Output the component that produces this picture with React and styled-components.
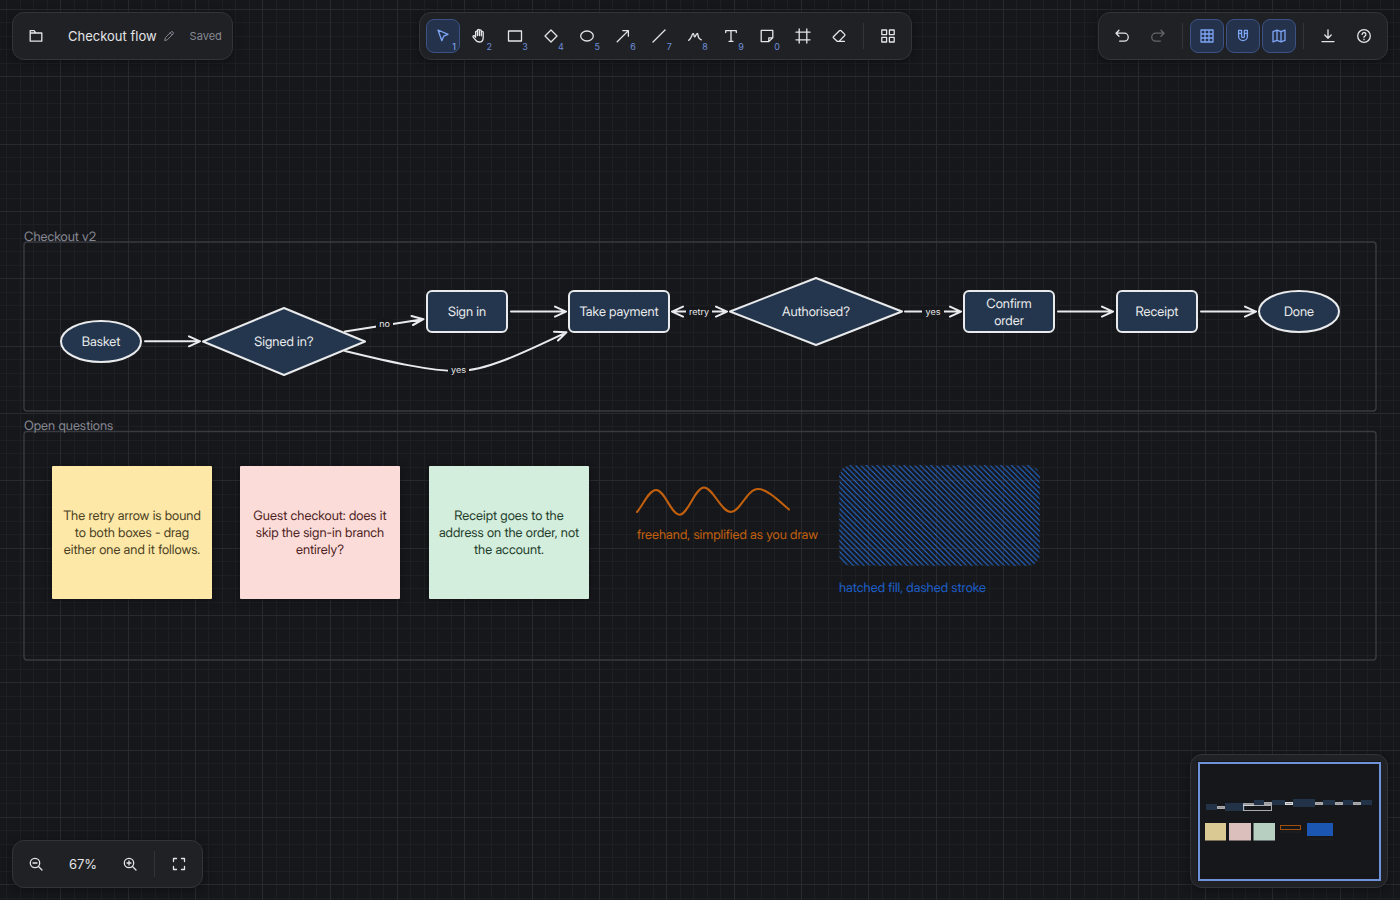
import React, { useEffect, useState } from "react";
import styled, { createGlobalStyle, css } from "styled-components";

const color = {
  canvas: "#16171b",
  gridMinor: "#1e1f23",
  gridMajor: "#292a2f",
  frame: "#3a3b41",
  panel: "#202125",
  line: "#33343b",
  text: "#e4e5e8",
  muted: "#868892",
  accent: "#7ea6f5",
  accentBg: "#24324c",
  accentLine: "#3a5285",
  nodeFill: "#24364d",
  ink: "#e9eaec",
  orange: "#c2600d",
  blue: "#1c5fc8",
  hatch: "#2470e0",
};

const GlobalStyle = createGlobalStyle`
  *, *::before, *::after { box-sizing: border-box; }
  body { margin: 0; background: ${color.canvas}; }
  body, button { font-family: Inter, "Liberation Sans", sans-serif; }
`;

/* ---------- chrome ---------- */

const Shell = styled.div`
  position: relative;
  min-height: 100vh;
  overflow: hidden;
  display: flex;
  flex-direction: column;
  justify-content: space-between;
  color: ${color.text};
`;

const Bar = styled.div`
  position: relative;
  display: flex;
  justify-content: space-between;
  align-items: ${(p) => p.$align || "flex-start"};
  padding: 12px;
`;

const Panel = styled.div`
  display: flex;
  align-items: center;
  gap: 2px;
  padding: 6px;
  background: ${color.panel};
  border: 1px solid ${color.line};
  border-radius: 12px;
  box-shadow: 0 2px 10px rgba(0, 0, 0, 0.35);
`;

const ToolButton = styled.button`
  position: relative;
  display: flex;
  align-items: center;
  justify-content: center;
  width: 34px;
  height: 34px;
  padding: 0;
  border: 1px solid transparent;
  border-radius: 8px;
  background: transparent;
  color: ${color.text};
  cursor: pointer;
  ${(p) =>
    p.$active &&
    css`
      background: ${color.accentBg};
      border-color: ${color.accentLine};
      color: ${color.accent};
    `}
  &:disabled {
    opacity: 0.35;
    cursor: default;
  }
`;

const KeyHint = styled.span`
  position: absolute;
  right: 3px;
  bottom: 0;
  font-size: 9px;
  line-height: 11px;
  color: ${(p) => (p.$active ? "#8fb0f5" : "#6c8fd9")};
`;

const Divider = styled.span`
  width: 1px;
  height: 26px;
  margin: 0 5px;
  background: ${color.line};
`;

const TitleButton = styled.button`
  display: flex;
  align-items: center;
  gap: 6px;
  height: 34px;
  padding: 0 13px;
  border: 0;
  background: transparent;
  color: ${color.text};
  font-size: 13px;
  line-height: 16px;
  svg {
    color: ${color.muted};
  }
`;

const SaveState = styled.span`
  padding-right: 4px;
  font-size: 11px;
  line-height: 16px;
  color: ${color.muted};
`;

const ZoomValue = styled.button`
  width: 56px;
  height: 34px;
  padding: 0;
  border: 0;
  background: transparent;
  color: ${color.text};
  font-size: 13px;
`;

const MapCanvas = styled.svg`
  display: block;
  width: 184px;
  height: 120px;
  background: ${color.canvas};
`;

/* ---------- board ---------- */

const Board = styled.main`
  position: absolute;
  inset: 0;
  font-family: "Inter Display", Inter, "Liberation Sans", sans-serif;
  text-rendering: geometricPrecision;
`;

const Drawing = styled.svg`
  position: absolute;
  inset: 0;
  width: 100%;
  height: 100%;
`;

const Placed = styled.div`
  position: absolute;
  left: ${(p) => p.$x}px;
  top: ${(p) => p.$y}px;
  width: ${(p) => (p.$w ? `${p.$w}px` : "max-content")};
  height: ${(p) => (p.$h ? `${p.$h}px` : "auto")};
  font-size: 13px;
  line-height: 17px;
`;

const Caption = styled(Placed)`
  margin: 0;
  font-weight: 400;
  color: ${(p) => p.$color};
  white-space: nowrap;
`;

const NodeLabel = styled(Placed)`
  display: flex;
  align-items: center;
  justify-content: center;
  text-align: center;
  padding: 2px 8px 0;
  color: ${color.ink};
`;

const EdgeLabel = styled(Placed)`
  display: flex;
  align-items: center;
  justify-content: center;
  background: ${color.canvas};
  color: ${color.ink};
  font-family: Inter, "Liberation Sans", sans-serif;
  font-size: 9px;
  line-height: 14px;
`;

const Note = styled(Placed)`
  display: flex;
  align-items: center;
  justify-content: center;
  padding: 2px 6px 0;
  text-align: center;
  border-radius: 1px;
  background: ${(p) => p.$fill};
  color: ${(p) => p.$color};
  box-shadow: 0 0 2px rgba(30, 30, 30, 1), 0 2px 8px rgba(0, 0, 0, 0.3);
`;

/* ---------- icons ---------- */

const glyphs = {
  folder: <path d="M2.2 13.2V2.7h3.9l1.7 2.3h6v8.2z M2.5 5h5" />,
  pencil: <path d="M2.4 13.6l.9-3.6 7.4-7.4a1.7 1.7 0 0 1 2.4 0l.3.3a1.7 1.7 0 0 1 0 2.4L6 12.7z M9.6 3.9l2.5 2.5" />,
  select: <path d="M3 2l10 4.3-4.3 1.9-1.9 4.5z" />,
  rect: <path d="M1.5 3h13v10h-13z" />,
  diamond: <path d="M8 2l6 6-6 6-6-6z" />,
  ellipse: <ellipse cx="8" cy="8" rx="6.3" ry="5" />,
  arrow: <path d="M2.2 13.8L13.4 2.6 M7.8 2.6h5.6v5.6" />,
  line: <path d="M2 14L14 2" />,
  draw: <path d="M1.7 12.4C3.6 11.2 4.3 9 5.3 6.6C6 5 6.8 5.4 7 7.2C7.2 9.6 8 9.4 8.7 7.6C9.6 5 10.8 4.8 11 7.2C11.2 9.8 12.3 11 14.3 11.8" />,
  text: <path d="M2.7 4.6V2.7h10.6v1.9 M8 2.7v10.6 M6 13.3h4" />,
  note: <path d="M2.2 2.4h11.6v7.4l-4 3.8H2.2z M13.8 9.8h-4v3.8" />,
  frame: <path d="M4.2 1v14 M11.8 1v14 M1 4.2h14 M1 11.8h14" />,
  eraser: <path d="M2.4 8.7L8.4 2.7a1.2 1.2 0 0 1 1.7 0l3.4 3.4a1.2 1.2 0 0 1 0 1.7L8 13.4H6.4L2.4 9.7a.7.7 0 0 1 0-1z M8 13.4h5.4" />,
  shapes: <path d="M1.8 2h4.8v4.6H1.8z M9.4 2h4.8v4.6H9.4z M1.8 9.4h4.8v4.6H1.8z M9.4 9.4h4.8v4.6H9.4z" />,
  undo: <path d="M5 2.2L2 5.2l3 3 M2 5.2h8.3a3.9 3.9 0 0 1 0 7.9H5.6" />,
  redo: <path d="M11 2.2l3 3-3 3 M14 5.2H5.7a3.9 3.9 0 0 0 0 7.9h4.7" />,
  grid: <path d="M2 2h12v12H2z M6 2v12 M10 2v12 M2 6h12 M2 10h12" />,
  magnet: <path d="M3.6 2.3h3v5.9a1.4 1.4 0 0 0 2.8 0V2.3h3v5.9a4.4 4.4 0 0 1-8.8 0z M3.6 5.3h3 M9.4 5.3h3" />,
  map: <path d="M2 3.6l4-1.5 4 1.5 4-1.5v10.3l-4 1.5-4-1.5-4 1.5z M6 2.1v10.3 M10 3.6v10.3" />,
  download: <path d="M8 1.8v8.4 M4.8 7l3.2 3.2L11.2 7 M2 13.6h12" />,
  help: (
    <>
      <circle cx="8" cy="8" r="6.3" />
      <path d="M6.1 6.4a1.9 1.9 0 1 1 2.8 1.7c-.6.3-.9.6-.9 1.2 M8 11.2v.5" />
    </>
  ),
  zoomOut: (
    <>
      <circle cx="7" cy="7" r="4.7" />
      <path d="M10.5 10.5L14 14 M5 7h4" />
    </>
  ),
  zoomIn: (
    <>
      <circle cx="7" cy="7" r="4.7" />
      <path d="M10.5 10.5L14 14 M5 7h4 M7 5v4" />
    </>
  ),
  fit: <path d="M2.5 5.5v-3h3 M10.5 2.5h3v3 M13.5 10.5v3h-3 M5.5 13.5h-3v-3" />,
  hand: (
    <path d="M4.6 9.2V4a.95.95 0 0 1 1.9 0V7.6 M6.5 7.5V2.4a.95.95 0 0 1 1.9 0V7.5 M8.4 7.5V2.8a.95.95 0 0 1 1.9 0V7.8 M10.3 7.8V4.3a.95.95 0 0 1 1.9 0v5.4c0 2.7-1.7 4.3-4 4.3-2 0-3.1-.8-4-2.3L2 8.8a.95.95 0 0 1 1.5-1l1.1 1.4" />
  ),
};

function Icon({ name, size = 16 }) {
  return (
    <svg
      width={size}
      height={size}
      viewBox="0 0 16 16"
      fill="none"
      stroke="currentColor"
      strokeWidth="1.3"
      strokeLinecap="round"
      strokeLinejoin="round"
      aria-hidden="true"
    >
      {glyphs[name]}
    </svg>
  );
}

function Tool({ icon, label, hint, active, disabled }) {
  return (
    <ToolButton type="button" aria-label={label} aria-pressed={active} $active={active} disabled={disabled}>
      <Icon name={icon} />
      {hint && <KeyHint $active={active}>{hint}</KeyHint>}
    </ToolButton>
  );
}

/* ---------- data ---------- */

const tools = [
  ["select", "Select", "1"],
  ["hand", "Pan", "2"],
  ["rect", "Rectangle", "3"],
  ["diamond", "Diamond", "4"],
  ["ellipse", "Ellipse", "5"],
  ["arrow", "Arrow", "6"],
  ["line", "Line", "7"],
  ["draw", "Draw", "8"],
  ["text", "Text", "9"],
  ["note", "Sticky note", "0"],
  ["frame", "Frame"],
  ["eraser", "Eraser"],
];

const nodes = [
  { kind: "ellipse", x: 61, y: 321, w: 80, h: 41, text: "Basket" },
  { kind: "diamond", x: 203, y: 308, w: 162, h: 67, text: "Signed in?" },
  { kind: "rect", x: 427, y: 291, w: 80, h: 41, text: "Sign in" },
  { kind: "rect", x: 569, y: 291, w: 100, h: 41, text: "Take payment" },
  { kind: "diamond", x: 730, y: 278, w: 172, h: 67, text: "Authorised?" },
  { kind: "rect", x: 964, y: 291, w: 90, h: 41, text: "Confirm order" },
  { kind: "rect", x: 1117, y: 291, w: 80, h: 41, text: "Receipt" },
  { kind: "ellipse", x: 1259, y: 291, w: 80, h: 41, text: "Done" },
];

const edgeLabels = [
  { x: 376, y: 318, w: 17, text: "no" },
  { x: 448, y: 364, w: 21, text: "yes" },
  { x: 686, y: 306, w: 26, text: "retry" },
  { x: 922, y: 306, w: 22, text: "yes" },
];

const head = (x, y) => `M${x - 11} ${y - 5}L${x} ${y}L${x - 11} ${y + 5}`;
const straight = (x1, x2, y) => `M${x1} ${y}H${x2}${head(x2, y)}`;

const edges = [
  straight(145, 200, 341.3),
  "M345 331.5L423 319.3M411.5 316L423.5 319.2L413 325",
  "M345 351C390 362 430 371 458 371S525 352 566 332.5M554 331.8L566.5 332.2L558 340.5",
  straight(511, 566, 311.6),
  straight(672, 727, 311.6) + "M683 306.6L672 311.6L683 316.6",
  straight(905, 961, 311.6),
  straight(1058, 1113, 311.6),
  straight(1201, 1256, 311.6),
];

const notes = [
  { x: 52, fill: "#fde8a8", ink: "#4b411f", text: "The retry arrow is bound to both boxes - drag either one and it follows." },
  { x: 240, fill: "#fbdcd9", ink: "#4e2323", text: "Guest checkout: does it skip the sign-in branch entirely?" },
  { x: 429, fill: "#d3eedd", ink: "#1f3d2c", text: "Receipt goes to the address on the order, not the account." },
];

const mapNodes = [
  [9, 43, 11, 6],
  [28, 42, 20, 8],
  [57, 39, 10, 5],
  [75, 39, 13, 5],
  [96, 38, 22, 8],
  [126, 39, 12, 5],
  [146, 39, 10, 5],
  [164, 39, 11, 5],
];
const mapEdges = [
  [20.5, 45.5, 7, 2, 0.6],
  [46.5, 42.5, 10, 2, 0.5],
  [46.5, 44.5, 28, 5, 0.7],
  [67.5, 41.5, 7, 2, 0.6],
  [88.5, 41.5, 7, 2, 0.9],
  [118.5, 41.5, 7, 2, 0.6],
  [138.5, 41.5, 7, 2, 0.6],
  [156.5, 41.5, 7, 2, 0.6],
];

/* ---------- grid ---------- */

const STEP = 13.466;

function useWindowSize() {
  const read = () => ({ w: window.innerWidth, h: window.innerHeight });
  const [size, setSize] = useState(read);
  useEffect(() => {
    const onResize = () => setSize(read());
    window.addEventListener("resize", onResize);
    return () => window.removeEventListener("resize", onResize);
  }, []);
  return size;
}

function gridLines(origin, length) {
  const minor = [];
  const major = [];
  for (let k = Math.ceil(-origin / STEP); origin + k * STEP < length; k += 1) {
    const at = Math.round(origin + k * STEP) + 0.5;
    (k % 5 === 0 ? major : minor).push(at);
  }
  return { minor, major };
}

function Grid() {
  const { w, h } = useWindowSize();
  const cols = gridLines(60.3, w);
  const rows = gridLines(9, h);
  const path = (xs, ys) => xs.map((x) => `M${x} 0V${h}`).join("") + ys.map((y) => `M0 ${y}H${w}`).join("");
  return (
    <>
      <path d={path(cols.minor, rows.minor)} stroke={color.gridMinor} />
      <path d={path(cols.major, rows.major)} stroke={color.gridMajor} />
    </>
  );
}

function Shape({ kind, x, y, w, h }) {
  if (kind === "ellipse") return <ellipse cx={x + w / 2} cy={y + h / 2} rx={w / 2} ry={h / 2} />;
  if (kind === "diamond")
    return <path d={`M${x + w / 2} ${y}L${x + w} ${y + h / 2}L${x + w / 2} ${y + h}L${x} ${y + h / 2}Z`} />;
  return <rect x={x} y={y} width={w} height={h} rx="5" />;
}

function Scene() {
  return (
    <Board aria-label="Board">
      <Drawing aria-hidden="true">
        <defs>
          <pattern id="hatch" width="8" height="8" patternUnits="userSpaceOnUse" patternTransform="translate(839 465) scale(0.673)">
            <path d="M-1 -1L9 9M-1 7L1 9M7 -1L9 1" stroke={color.hatch} strokeWidth="1.5" />
          </pattern>
        </defs>
        <Grid />
        <g fill="none" stroke={color.frame} strokeWidth="1.4">
          <rect x="24" y="242" width="1352" height="169" rx="3" />
          <rect x="24" y="431.5" width="1352" height="228.5" rx="3" />
        </g>
        <g fill={color.nodeFill} stroke={color.ink} strokeWidth="2" strokeLinejoin="round">
          {nodes.map((n) => (
            <Shape key={n.text} {...n} />
          ))}
        </g>
        <path d={edges.join("")} fill="none" stroke={color.ink} strokeWidth="2" strokeLinecap="round" strokeLinejoin="round" />
        <path
          d="M637 512C643 505 649 490 656 490C665 490 671 514.7 679.5 514.7C688 514.7 695 487.5 704 487.5C713 487.5 721 512 731 512C740 512 747 489 758 489C767 489 778 500 789 509.5"
          fill="none"
          stroke={color.orange}
          strokeWidth="2"
          strokeLinecap="round"
        />
        <rect x="839" y="465" width="201" height="101" rx="12" fill="url(#hatch)" stroke="#1e1e1f" strokeWidth="1.4" strokeDasharray="5 4" />
      </Drawing>

      <Caption as="h2" $x={24} $y={229} $color={color.muted}>Checkout v2</Caption>
      <Caption as="h2" $x={24} $y={418} $color={color.muted}>Open questions</Caption>

      {nodes.map((n) => (
        <NodeLabel key={n.text} $x={n.x} $y={n.y} $w={n.w} $h={n.h}>
          {n.text}
        </NodeLabel>
      ))}
      {edgeLabels.map((l) => (
        <EdgeLabel key={l.x} $x={l.x} $y={l.y} $w={l.w} $h={14}>
          {l.text}
        </EdgeLabel>
      ))}
      {notes.map((n) => (
        <Note key={n.x} $x={n.x} $y={466} $w={160} $h={133} $fill={n.fill} $color={n.ink}>
          {n.text}
        </Note>
      ))}
      <Caption $x={637} $y={527} $color={color.orange}>freehand, simplified as you draw</Caption>
      <Caption $x={839} $y={580} $color={color.blue}>hatched fill, dashed stroke</Caption>
    </Board>
  );
}

function MiniMap() {
  return (
    <MapCanvas viewBox="0 0 184 120" role="img" aria-label="Overview map">
      {mapNodes.map(([x, y, w, h]) => (
        <rect key={x} x={x} y={y} width={w} height={h} fill="#223247" />
      ))}
      {mapEdges.map(([x, y, w, h, o]) => (
        <rect
          key={`${x}-${y}`}
          x={x}
          y={y}
          width={w}
          height={h}
          fill={h === 2 ? color.ink : "none"}
          fillOpacity="0.6"
          stroke={color.ink}
          strokeOpacity={o}
        />
      ))}
      <rect x="8" y="62" width="21" height="17.5" fill="#dbc994" />
      <rect x="32" y="62" width="22" height="17.5" fill="#dabfbd" />
      <rect x="56.5" y="62" width="21.5" height="17.5" fill="#b7cfc1" />
      <rect x="83.5" y="64.5" width="20" height="4" fill="none" stroke="#a04f0e" />
      <rect x="84" y="70" width="20" height="2" fill="#1c1c1d" />
      <rect x="110" y="62" width="26" height="13" fill="#1b57b2" />
      <rect x="110" y="77" width="26" height="2" fill="#1c1c1d" />
      <rect x="2" y="2" width="181" height="117" fill="none" stroke="#6f93d9" strokeWidth="2" />
    </MapCanvas>
  );
}

export default function App() {
  return (
    <>
      <GlobalStyle />
      <Shell>
        <Scene />
        <Bar as="header">
          <Panel>
            <Tool icon="folder" label="Open boards" />
            <TitleButton type="button">
              Checkout flow
              <Icon name="pencil" size={12} />
            </TitleButton>
            <SaveState>Saved</SaveState>
          </Panel>
          <Panel role="toolbar" aria-label="Tools">
            {tools.map(([icon, label, hint]) => (
              <Tool key={icon} icon={icon} label={label} hint={hint} active={icon === "select"} />
            ))}
            <Divider />
            <Tool icon="shapes" label="Shape library" />
          </Panel>
          <Panel role="toolbar" aria-label="View">
            <Tool icon="undo" label="Undo" />
            <Tool icon="redo" label="Redo" disabled />
            <Divider />
            <Tool icon="grid" label="Grid" active />
            <Tool icon="magnet" label="Snap" active />
            <Tool icon="map" label="Overview" active />
            <Divider />
            <Tool icon="download" label="Export" />
            <Tool icon="help" label="Help" />
          </Panel>
        </Bar>
        <Bar as="footer" $align="flex-end">
          <Panel>
            <Tool icon="zoomOut" label="Zoom out" />
            <ZoomValue type="button">67%</ZoomValue>
            <Tool icon="zoomIn" label="Zoom in" />
            <Divider />
            <Tool icon="fit" label="Zoom to fit" />
          </Panel>
          <Panel>
            <MiniMap />
          </Panel>
        </Bar>
      </Shell>
    </>
  );
}
